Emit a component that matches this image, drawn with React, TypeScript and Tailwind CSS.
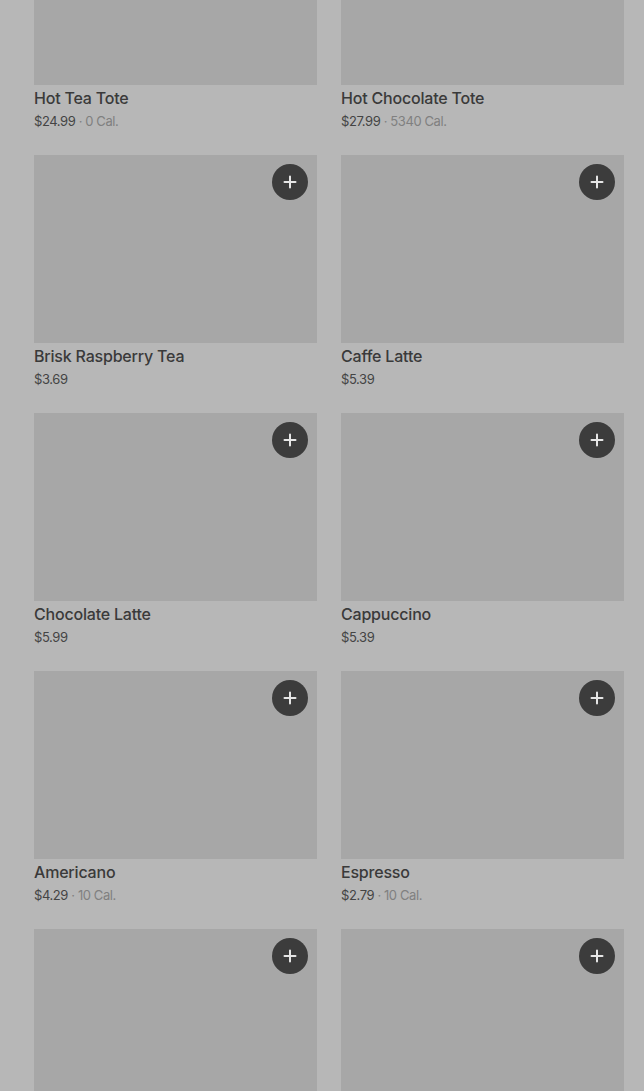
import React from "react";

type Item = { name: string; price: string; cal?: string; plus: boolean };

const items: Item[] = [
  { name: "Hot Tea Tote", price: "$24.99", cal: "0 Cal.", plus: true },
  { name: "Hot Chocolate Tote", price: "$27.99", cal: "5340 Cal.", plus: true },
  { name: "Brisk Raspberry Tea", price: "$3.69", plus: true },
  { name: "Caffe Latte", price: "$5.39", plus: true },
  { name: "Chocolate Latte", price: "$5.99", plus: true },
  { name: "Cappuccino", price: "$5.39", plus: true },
  { name: "Americano", price: "$4.29", cal: "10 Cal.", plus: true },
  { name: "Espresso", price: "$2.79", cal: "10 Cal.", plus: true },
  { name: "", price: "", plus: true },
  { name: "", price: "", plus: true },
];

function Card({ item }: { item: Item }) {
  return (
    <div className="flex flex-col">
      <div className="relative h-[188px] bg-[#a7a7a7]">
        {item.plus && (
          <button className="absolute right-[9px] top-[9px] flex h-9 w-9 items-center justify-center rounded-full bg-[#3c3c3c]">
            <svg width="14" height="14" viewBox="0 0 14 14">
              <path d="M7 1.5v11M1.5 7h11" stroke="#e6e6e6" strokeWidth="2" strokeLinecap="round" />
            </svg>
          </button>
        )}
      </div>
      <div className="h-[70px] pt-[1px]">
        <div className="text-[16px] leading-[24px] font-medium tracking-[-0.2px] text-[#3a3a3a]">{item.name}</div>
        {item.price && (
          <div className="text-[13px] leading-[22px] tracking-[-0.4px] text-[#444444]">
            {item.price}
            {item.cal && <span className="text-[#808080]"> · {item.cal}</span>}
          </div>
        )}
      </div>
    </div>
  );
}

export default function App() {
  return (
    <div
      className="h-[1091px] overflow-hidden bg-[#b7b7b7]"
      style={{ fontFamily: "Inter, 'Noto Sans', sans-serif" }}
    >
      <div className="-mt-[103px] grid grid-cols-2 gap-x-6 pl-[34px] pr-[20px]">
        {items.map((it, i) => (
          <Card key={i} item={it} />
        ))}
      </div>
    </div>
  );
}
